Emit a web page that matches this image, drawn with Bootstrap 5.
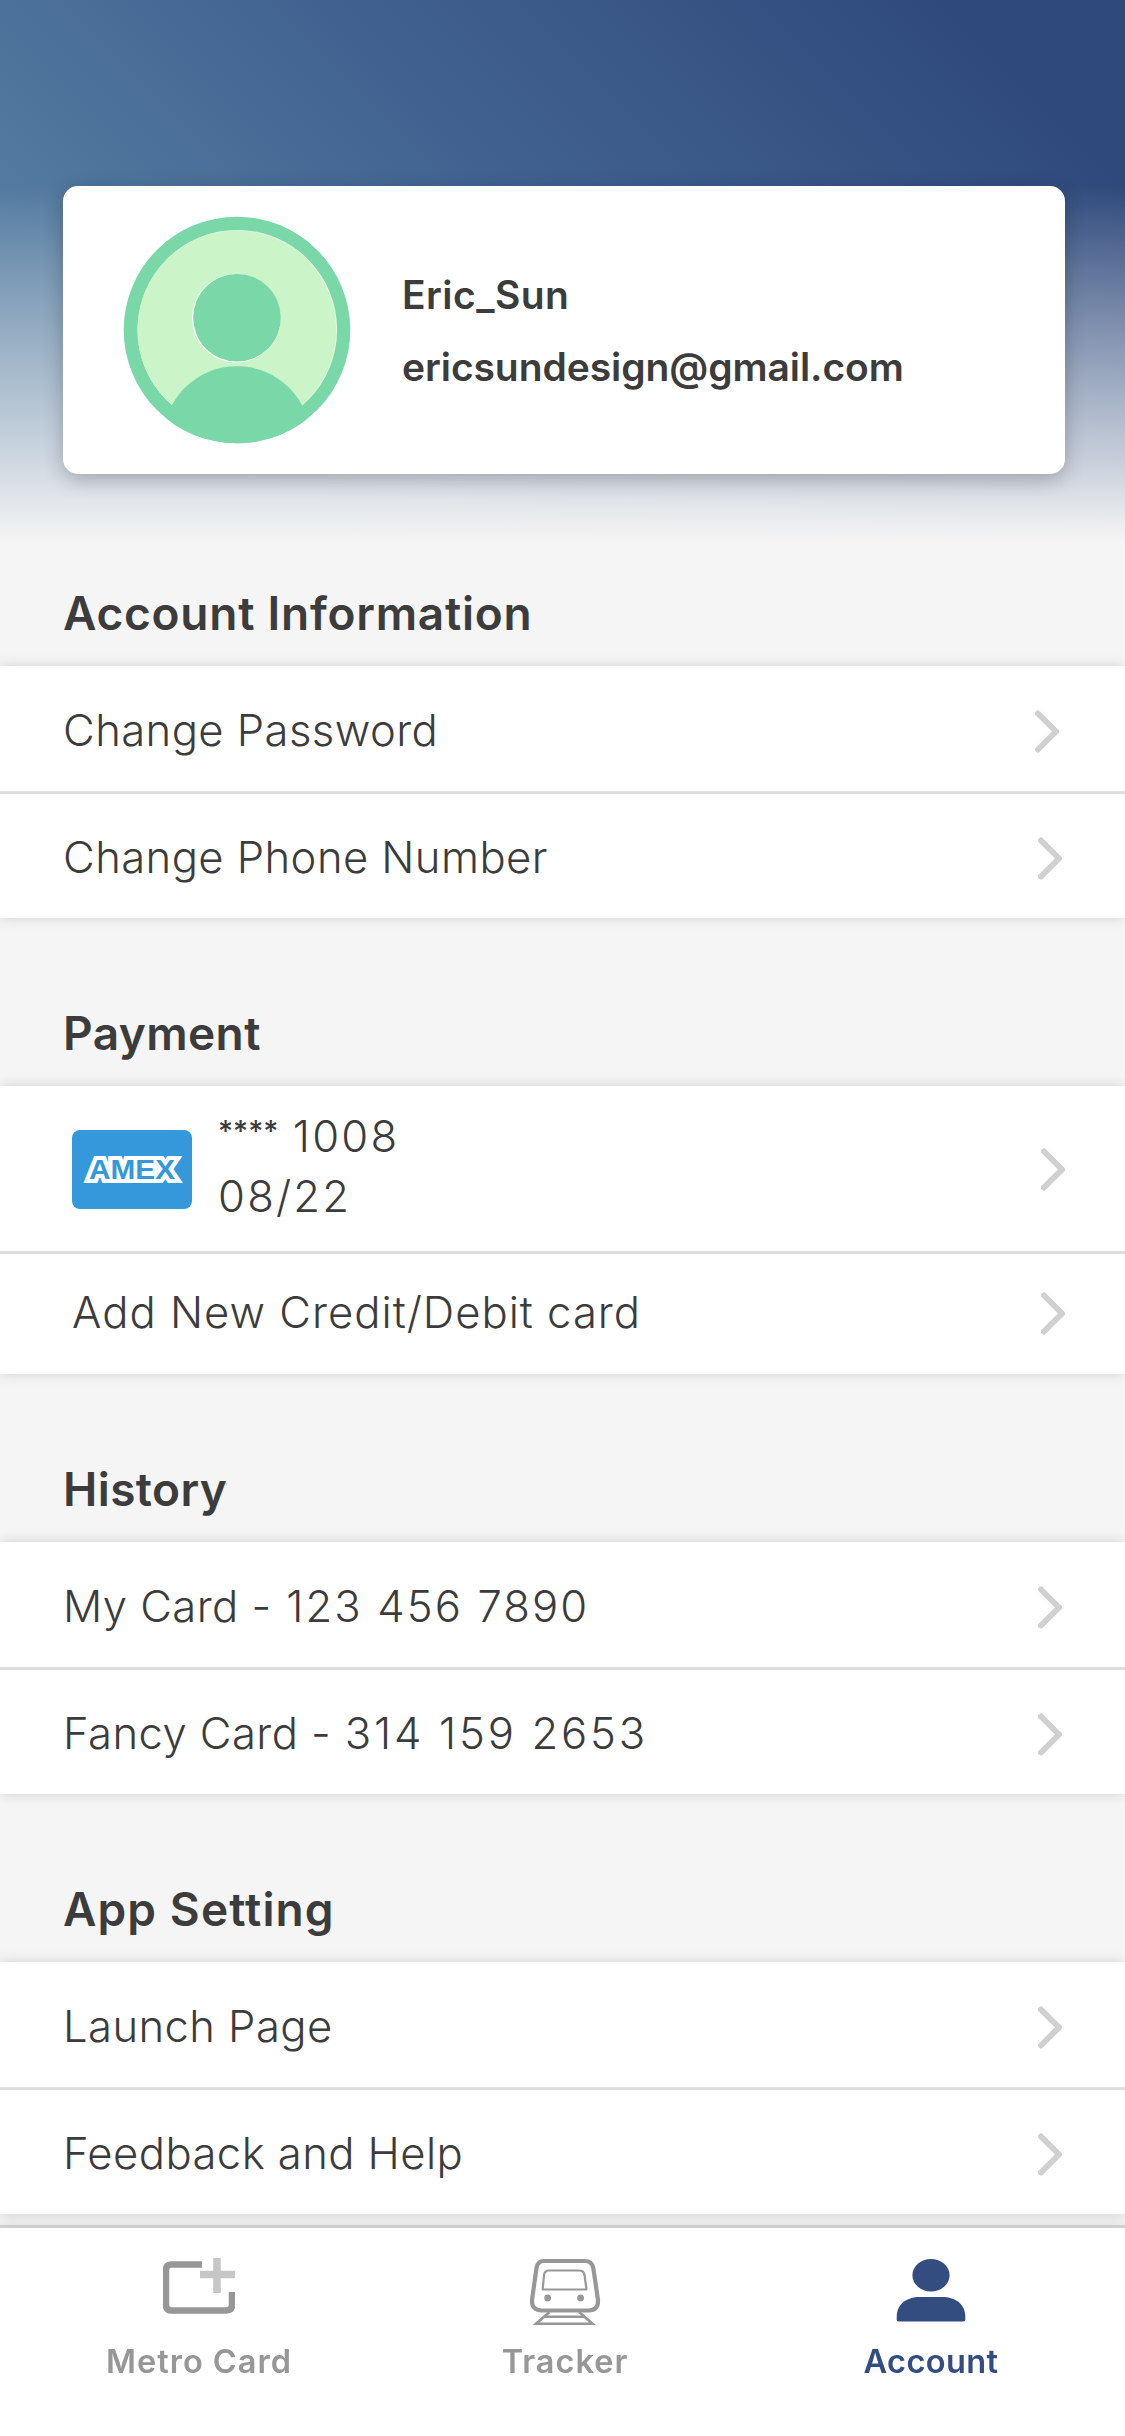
<!DOCTYPE html>
<html lang="en">
<head>
<meta charset="utf-8">
<meta name="viewport" content="width=device-width, initial-scale=1">
<title>Account</title>
<link href="https://cdn.jsdelivr.net/npm/bootstrap@5.3.0/dist/css/bootstrap.min.css" rel="stylesheet">
<style>
  :root { --ink: #3c3c3c; --ground: #f5f5f5; --navy: #334d80; }
  body {
    font-family: Inter, "Liberation Sans", sans-serif;
    color: var(--ink);
    background: var(--ground);
    height: 2436px;
    overflow: hidden;
  }
  .hero {
    height: 560px;
    padding: 186px 60px 0 63px;
    background:
      linear-gradient(to bottom, rgba(245,245,245,0) 186px, rgba(245,245,245,.8) 474px, #f5f5f5 542px),
      linear-gradient(225deg, #2f497c 11%, #416290 48%, #537ba0 79%);
  }
  .profile {
    height: 288px;
    border: 0;
    border-radius: 15px;
    padding-left: 60px;
    box-shadow: 0 6px 20px rgba(0,0,0,.24);
    color: var(--ink);
  }
  .avatar { width: 228px; height: 228px; }
  .profile-text { margin-left: 51px; padding-top: 2px; font-size: 39px; font-weight: 600; line-height: 72px; }
  .profile-name { letter-spacing: .44px; }
  .profile-mail { letter-spacing: -.08px; }

  .group-title {
    height: 106px;
    padding: 23px 63px 0;
    margin: 0;
    font-size: 46px;
    font-weight: 590;
    line-height: 60px;
    letter-spacing: .75px;
  }
  .title-tight { letter-spacing: .4px; }
  .title-loose { letter-spacing: 1.1px; }
  .group-list {
    --bs-list-group-color: var(--ink);
    font-size: 43.6px;
    font-weight: 350;
    line-height: 60px;
    margin-bottom: 62px;
    box-shadow: 0 0 12px rgba(0,0,0,.15);
  }
  .entry {
    height: 124px;
    padding: 3px 63px 0;
    border: 0;
    color: var(--ink);
    letter-spacing: .42px;
  }
  .entry:first-child {
    height: 128px;
    padding-top: 5px;
    border-bottom: 3px solid #dedede;
  }
  .entry-pay, .entry-pay:first-child { padding: 0 60px 2px 72px; letter-spacing: 1px; }
  .entry-pay { height: 120px; }
  .entry-pay:first-child { height: 168px; padding-bottom: 0; }
  .digits { letter-spacing: 2.1px; margin-left: 2px; }
  .digits-wide { letter-spacing: 2.75px; margin-left: 1px; }
  .card-lines { margin-left: 26px; margin-bottom: 3px; letter-spacing: 2.2px; }
  .stars { font-size: 29px; font-weight: 450; line-height: 1; vertical-align: 11px; letter-spacing: 0; }
  .amex { width: 120px; height: 79px; margin-top: 2px; }
  .chev { width: 24px; height: 44px; fill: none; stroke: #d0d0d0; stroke-width: 6; stroke-linecap: round; stroke-linejoin: round; }
  .chev-in { margin-right: 3px; }
  .chev-low { margin-top: 1px; }

  .tabs {
    position: fixed;
    left: 0; right: 0; bottom: 0;
    height: 211px;
    background: #fff;
    border-top: 3px solid #cfcfcf;
    box-shadow: 0 0 15px rgba(0,0,0,.1);
    padding: 0 11px 0 16px;
  }
  .tab { width: 33.333%; padding-top: 27px; color: #979797; font-size: 32.5px; font-weight: 590; line-height: 40px; letter-spacing: 1px; }
  .tab svg { height: 78px; display: block; margin-bottom: 9px; }
  .tab-on { color: var(--navy); letter-spacing: .4px; }
</style>
</head>
<body>
<svg class="d-none"><symbol id="chevron" viewBox="0 0 24 44"><path d="M3 4.500l18 18L3 40.500"/></symbol></svg>

<header class="hero">
  <div class="card profile flex-row align-items-center">
    <svg class="avatar flex-shrink-0" viewBox="0 0 228 228">
      <defs><clipPath id="disc"><circle cx="114" cy="114" r="113.3"/></clipPath></defs>
      <circle cx="114" cy="114" r="113.3" fill="#7ad7a8"/>
      <circle cx="114.3" cy="113.7" r="99.8" fill="#e4f8e4"/>
      <circle cx="113.8" cy="113.9" r="99.3" fill="#cbf4c8"/>
      <circle cx="113.300" cy="102.200" r="44.300" fill="#fff"/>
      <circle cx="114" cy="101.7" r="43.8" fill="#7ad7a8"/>
      <circle cx="114" cy="224" r="73.8" fill="#7ad7a8" clip-path="url(#disc)"/>
    </svg>
    <div class="profile-text">
      <div class="profile-name">Eric_Sun</div>
      <div class="profile-mail">ericsundesign@gmail.com</div>
    </div>
  </div>
</header>

<main>
  <h2 class="group-title">Account Information</h2>
  <div class="list-group list-group-flush group-list">
    <a class="list-group-item entry d-flex align-items-center justify-content-between">Change Password
      <svg class="chev chev-in"><use href="#chevron"/></svg></a>
    <a class="list-group-item entry d-flex align-items-center justify-content-between">Change Phone Number
      <svg class="chev"><use href="#chevron"/></svg></a>
  </div>

  <h2 class="group-title title-tight">Payment</h2>
  <div class="list-group list-group-flush group-list">
    <a class="list-group-item entry entry-pay d-flex align-items-center">
      <svg class="amex flex-shrink-0" viewBox="0 0 120 79">
        <rect width="120" height="79" rx="8" fill="#3498db"/>
        <text x="17" y="49" font-family="Liberation Sans" font-weight="700" font-size="27" textLength="86" lengthAdjust="spacingAndGlyphs" fill="#3498db" stroke="#fff" stroke-width="8" stroke-miterlimit="2.2" paint-order="stroke" letter-spacing="0">AMEX</text>
      </svg>
      <div class="card-lines flex-grow-1">
        <div><span class="stars">****</span> 1008</div>
        <div>08/22</div>
      </div>
      <svg class="chev chev-low"><use href="#chevron"/></svg></a>
    <a class="list-group-item entry entry-pay d-flex align-items-center justify-content-between">Add New Credit/Debit card
      <svg class="chev"><use href="#chevron"/></svg></a>
  </div>

  <h2 class="group-title title-tight">History</h2>
  <div class="list-group list-group-flush group-list">
    <a class="list-group-item entry d-flex align-items-center justify-content-between">
      <div>My Card - <span class="digits">123 456 7890</span></div>
      <svg class="chev"><use href="#chevron"/></svg></a>
    <a class="list-group-item entry d-flex align-items-center justify-content-between">
      <div>Fancy Card - <span class="digits-wide">314 159 2653</span></div>
      <svg class="chev"><use href="#chevron"/></svg></a>
  </div>

  <h2 class="group-title title-loose">App Setting</h2>
  <div class="list-group list-group-flush group-list">
    <a class="list-group-item entry d-flex align-items-center justify-content-between">Launch Page
      <svg class="chev"><use href="#chevron"/></svg></a>
    <a class="list-group-item entry d-flex align-items-center justify-content-between">Feedback and Help
      <svg class="chev"><use href="#chevron"/></svg></a>
  </div>
</main>

<nav class="tabs d-flex">
  <a class="tab d-flex flex-column align-items-center text-decoration-none">
    <svg width="72" viewBox="0 0 72 78">
      <path d="M39 9.500H8.500Q3 9.500 3 15V50Q3 55.500 8.500 55.500H63.500Q69 55.500 69 50V37" fill="none" stroke="#979797" stroke-width="6.500"/>
      <path d="M37 19.500H72M54 3V38" fill="none" stroke="#c6c6c6" stroke-width="7.500"/>
    </svg>
    Metro Card
  </a>
  <a class="tab d-flex flex-column align-items-center text-decoration-none">
    <svg width="72" viewBox="0 0 72 78" fill="none" stroke="#979797">
      <path d="M15 6H56Q63 6 64.300 13L69 45Q69.500 55 59.500 55.500H12.500Q2.500 55 3 45L7.500 13Q8.500 6 15 6Z" stroke-width="4.200"/>
      <path d="M20 15.500H50Q55 15.500 55.500 20L57.500 34.500H13.700L15 20Q15.500 15.500 20 15.500Z" stroke-width="2.200" stroke-linejoin="round"/>
      <circle cx="18.700" cy="43" r="3.400" fill="#979797" stroke="none"/>
      <circle cx="51.600" cy="43" r="3.400" fill="#979797" stroke="none"/>
      <path d="M20.500 57L7 68.800H63.500L50 57M16 61.800H55" stroke-width="2.600"/>
    </svg>
    Tracker
  </a>
  <a class="tab tab-on d-flex flex-column align-items-center text-decoration-none">
    <svg width="70" viewBox="0 0 70 78" fill="#334d80">
      <ellipse cx="35" cy="20.300" rx="18.600" ry="16.300"/>
      <path d="M.7 64.500V62C.7 50 9 42 24.500 42H45.500C61 42 69.300 50 69.300 62V64.500Q69.300 66.500 67.500 66.500H2.500Q.7 66.500 .7 64.500Z"/>
    </svg>
    Account
  </a>
</nav>
<script src="https://cdn.jsdelivr.net/npm/bootstrap@5.3.0/dist/js/bootstrap.bundle.min.js"></script>
</body>
</html>
